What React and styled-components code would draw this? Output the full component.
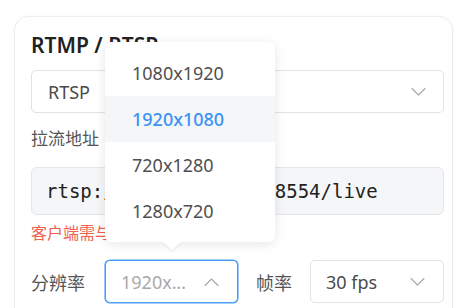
import React from "react";
import styled, { createGlobalStyle } from "styled-components";

const GlobalStyle = createGlobalStyle`
  body {
    margin: 0;
    background: #ffffff;
    font-family: "Noto Sans", "Noto Sans CJK SC", sans-serif;
  }
`;

const resolutions = ["1080x1920", "1920x1080", "720x1280", "1280x720"];

function Chevron({ up }) {
  return (
    <svg width="15" height="8" viewBox="0 0 15 8" fill="none">
      <path
        d={up ? "M1 7.5L7.5 1L14 7.5" : "M1 0.5L7.5 7L14 0.5"}
        stroke="#ababab"
        strokeWidth="1.2"
        strokeLinecap="round"
        strokeLinejoin="round"
      />
    </svg>
  );
}

export default function App() {
  return (
    <Page>
      <GlobalStyle />
      <Card>
        <Title>RTMP / RTSP</Title>

        <Select>
          <SelectText>RTSP</SelectText>
          <Chevron />
        </Select>

        <Label>拉流地址</Label>
        <UrlBox>rtsp://192.168.1.10:8554/live</UrlBox>
        <Hint>客户端需与设备处于同一局域网</Hint>

        <Row>
          <RowLabel>分辨率</RowLabel>
          <SelectWrap>
            <Select $active $small>
              <SelectText $placeholder>1920x…</SelectText>
              <Chevron up />
            </Select>
            <Dropdown>
              {resolutions.map((r) => (
                <Option key={r} $selected={r === "1920x1080"}>
                  {r}
                </Option>
              ))}
            </Dropdown>
          </SelectWrap>
          <RowLabel $second>帧率</RowLabel>
          <Select $small $grow>
            <SelectText>30 fps</SelectText>
            <Chevron />
          </Select>
        </Row>
      </Card>
    </Page>
  );
}

const Page = styled.div`
  padding: 16px 10px 0 14px;
  height: 308px;
  box-sizing: border-box;
  overflow: hidden;
`;

const Card = styled.div`
  border: 1px solid #ececec;
  border-radius: 14px;
  padding: 14px 8px 40px 16px;
  background: #fff;
  box-shadow: 0 1px 6px rgba(0, 0, 0, 0.03);
`;

const Title = styled.div`
  font-size: 21px;
  font-weight: 600;
  line-height: 28px;
  color: #222;
  margin-bottom: 11px;
`;

const Select = styled.div`
  display: flex;
  align-items: center;
  justify-content: space-between;
  box-sizing: border-box;
  height: 43px;
  padding: ${(p) => (p.$small ? "0 18px 0 15px" : "0 17px 0 16px")};
  border: 1px solid ${(p) => (p.$active ? "#4c9df8" : "#e2e2e2")};
  box-shadow: ${(p) => (p.$active ? "0 0 0 0.6px #4c9df8" : "none")};
  border-radius: 5px;
  background: #fff;
  flex: ${(p) => (p.$grow ? "1" : "none")};
  width: ${(p) => (p.$active ? "133px" : "auto")};
`;

const SelectText = styled.span`
  font-size: 18px;
  color: ${(p) => (p.$placeholder ? "#a9a9a9" : "#4a4a4a")};
`;

const Label = styled.div`
  font-size: 17px;
  line-height: 26px;
  color: #555;
  margin: 13px 0 15px;
`;

const UrlBox = styled.div`
  box-sizing: border-box;
  height: 48px;
  display: flex;
  align-items: center;
  padding: 0 14px;
  background: #f5f6f8;
  border: 1px solid #e4e6ea;
  border-radius: 6px;
  font-family: "DejaVu Sans Mono", monospace;
  font-size: 19px;
  color: #222;
`;

const Hint = styled.div`
  font-size: 16px;
  line-height: 22px;
  color: #f0614e;
  margin-top: 7px;
`;

const Row = styled.div`
  display: flex;
  align-items: center;
  margin-top: 16px;
`;

const RowLabel = styled.span`
  font-size: 18px;
  color: #555;
  margin: ${(p) => (p.$second ? "0 18px 0 18px" : "0 20px 0 0")};
`;

const SelectWrap = styled.div`
  position: relative;
`;

const Dropdown = styled.div`
  position: absolute;
  left: 0;
  bottom: calc(100% + 18px);
  width: 170px;
  padding: 8px 0;
  background: #fff;
  border-radius: 6px;
  box-shadow: 0 2px 12px rgba(0, 0, 0, 0.1);
  z-index: 2;

  &::after {
    content: "";
    position: absolute;
    left: 58px;
    top: 100%;
    border-left: 9px solid transparent;
    border-right: 9px solid transparent;
    border-top: 8px solid #fff;
    filter: drop-shadow(0 2px 1px rgba(0, 0, 0, 0.05));
  }
`;

const Option = styled.div`
  height: 46px;
  display: flex;
  align-items: center;
  padding-left: 27px;
  font-size: 18px;
  color: ${(p) => (p.$selected ? "#3a93f5" : "#4f4f4f")};
  font-weight: ${(p) => (p.$selected ? 500 : 400)};
  background: ${(p) => (p.$selected ? "#f5f6f8" : "transparent")};
`;
